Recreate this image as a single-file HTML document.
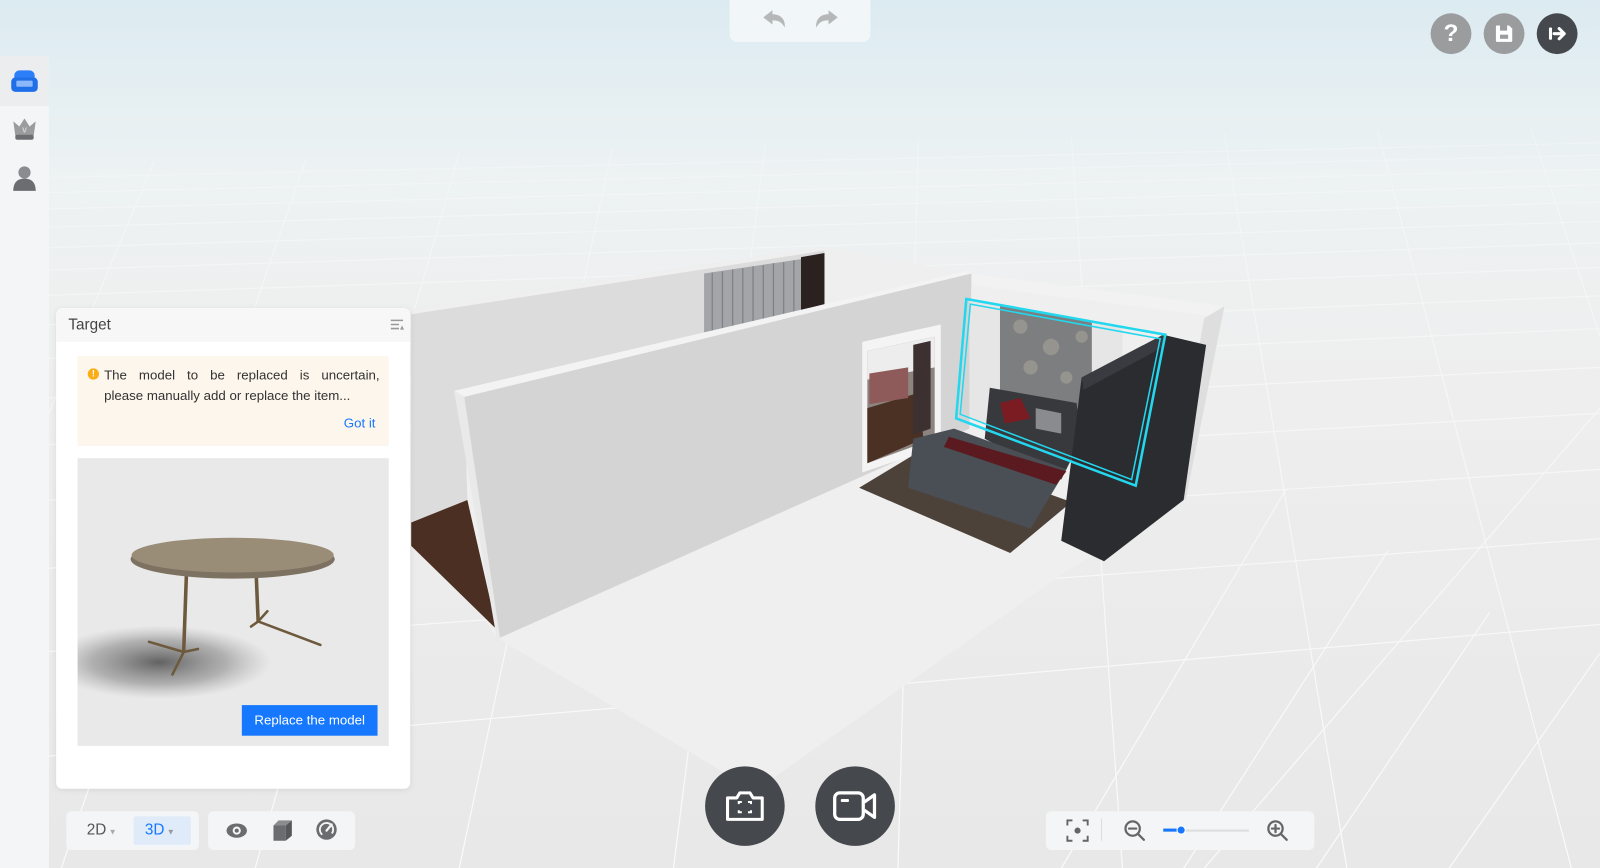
<!DOCTYPE html>
<html><head><meta charset="utf-8">
<style>
html,body{margin:0;padding:0;width:1600px;height:868px;overflow:hidden;background:#ececec;}
#w{position:absolute;left:0;top:0;width:1568px;height:851px;transform:scale(1.0204);transform-origin:0 0;font-family:"Liberation Sans",sans-serif;}
.abs{position:absolute;}
.panel{left:55px;top:302px;width:347px;height:471px;background:#fff;border-radius:6px;box-shadow:0 1px 6px rgba(0,0,0,.08);overflow:hidden;}
.bar{background:#f4f5f6;border-radius:5px;}
.circ{border-radius:50%;display:flex;align-items:center;justify-content:center;}
</style></head><body><div id="w">
<svg class="abs" style="left:0;top:0" width="1568" height="851" viewBox="0 0 1568 851">
<defs>
<linearGradient id="sky" x1="0" y1="0" x2="0" y2="1">
<stop offset="0" stop-color="#dcebf1"/><stop offset="0.2" stop-color="#edf2f3"/><stop offset="0.45" stop-color="#eeeeee"/><stop offset="1" stop-color="#e8e8e8"/></linearGradient>
<linearGradient id="fade" x1="0" y1="0" x2="0" y2="1"><stop offset="0" stop-color="#fff" stop-opacity="0"/><stop offset="0.25" stop-color="#fff" stop-opacity="0.5"/><stop offset="1" stop-color="#fff" stop-opacity="1"/></linearGradient>
<mask id="m"><rect width="1568" height="851" fill="url(#fade)"/></mask>
</defs>
<rect width="1568" height="851" fill="url(#sky)"/>
<g stroke="#fafafa" stroke-width="1.2" fill="none" mask="url(#m)">
<path d="M0 175 L1568 140 M0 190 L1568 152 M0 206 L1568 166 M0 224 L1568 181 M0 244 L1568 198 M0 266 L1568 217 M0 291 L1568 238 M0 320 L1568 262 M0 353 L1568 290 M0 392 L1568 322 M0 438 L1568 360 M0 493 L1568 405 M0 560 L1568 460 M0 642 L1568 528 M0 745 L1568 612"/>
<path d="M150 160 L0 520 M300 155 L60 851 M450 150 L250 851 M600 145 L450 851 M750 140 L660 851 M900 137 L880 851 M1050 134 L1100 851 M1200 131 L1320 851 M1350 128 L1540 851 M1500 125 L1568 330"/>
<path d="M1260 480 L1040 851 M1360 540 L1160 851 M1460 600 L1290 851 M1568 640 L1420 851 M1568 400 L1180 851"/>
</g>
<!-- room floor -->
<polygon points="403,500 487,625 740,775 1045,560 1160,490 1200,300 950,268 808,242 403,303" fill="#efefef"/>
<!-- left back wall -->
<polygon points="403,303 808,242 808,300 455,389 458,490 403,512" fill="#dcdcdc"/>
<polygon points="403,303 808,242 812,245 403,308" fill="#efefef"/>
<polygon points="403,512 458,490 487,617 403,535" fill="#4a2f22"/>
<!-- curtain -->
<polygon points="690,268 785,254 785,310 690,326" fill="#a3a5a8"/>
<g stroke="#7e8085" stroke-width="1.2"><path d="M698 267 L698 325 M708 266 L708 323 M718 264 L718 322 M728 263 L728 320 M738 261 L738 318 M748 260 L748 317 M758 258 L758 315 M768 257 L768 313 M778 255 L778 312"/></g>
<polygon points="785,252 808,248 808,298 785,304" fill="#2b2220"/>
<!-- right bedroom walls -->
<polygon points="950,268 1200,300 1190,310 955,280" fill="#f2f2f2"/>
<polygon points="1180,312 1200,300 1162,490 1150,486" fill="#dedede"/>
<!-- front wall -->
<polygon points="445,383 950,265 952,268 455,389" fill="#f3f3f3"/>
<polygon points="445,383 455,389 490,625 487,627" fill="#e9e9e9"/>
<polygon points="455,389 952,268 950,420 490,625" fill="#d4d4d4"/>
<!-- door/mirror -->
<polygon points="845,335 922,318 922,437 845,463" fill="#f4f4f4"/>
<polygon points="850,344 916,330 916,430 850,454" fill="#8c857f"/>
<polygon points="850,344 916,330 916,360 850,372" fill="#ededed"/>
<polygon points="850,400 900,385 905,430 850,454" fill="#4b3024"/>
<polygon points="852,366 890,360 890,390 852,396" fill="#8e5a5a"/>
<polygon points="895,338 912,334 912,420 895,426" fill="#3c3030"/>
<!-- bedroom back -->
<polygon points="950,295 1100,320 1100,445 950,410" fill="#e6e6e6"/>
<polygon points="980,300 1070,315 1070,440 980,410" fill="#7c7e80"/>
<g fill="#a8a39a" opacity="0.6"><circle cx="1000" cy="320" r="7"/><circle cx="1030" cy="340" r="8"/><circle cx="1060" cy="330" r="6"/><circle cx="1010" cy="360" r="7"/><circle cx="1045" cy="370" r="6"/></g>
<!-- rug -->
<polygon points="842,478 905,440 1050,492 990,542" fill="#4d4239"/>
<!-- bed -->
<polygon points="970,380 1055,395 1060,430 1040,470 965,430" fill="#38393d"/>
<polygon points="980,395 1000,390 1010,410 985,415" fill="#7a1c22"/>
<polygon points="1015,400 1040,405 1040,425 1015,420" fill="#8a8b8e"/>
<polygon points="895,430 935,420 1045,460 1010,518 890,478" fill="#4a4e55"/>
<polygon points="930,428 1045,462 1035,475 925,438" fill="#5a1a1f"/>
<!-- wardrobe -->
<polygon points="1060,370 1140,328 1182,338 1160,490 1082,550 1040,530" fill="#2b2c30"/>
<polygon points="1060,370 1140,328 1140,340 1062,382" fill="#3a3b40"/>
<!-- cyan frame -->
<polygon points="947,293 1142,328 1113,476 937,410" fill="none" stroke="#22d7ee" stroke-width="2.5"/>
<polygon points="951,298 1137,332 1109,470 941,406" fill="none" stroke="#22d7ee" stroke-width="1.5"/>
</svg>

<!-- sidebar -->
<div class="abs" style="left:0;top:55px;width:48px;height:796px;background:#f3f5f6;"></div>
<div class="abs" style="left:0;top:55px;width:48px;height:49px;background:#ebedef;"></div>
<svg class="abs" style="left:10px;top:66px" width="28" height="26" viewBox="0 0 28 26"><rect x="4" y="3" width="20" height="16" rx="5" fill="#2d7ff9"/><rect x="1" y="10" width="26" height="14" rx="4" fill="#1f6fe8"/><rect x="6" y="13" width="16" height="6" rx="1" fill="#8cb8fb"/></svg>
<svg class="abs" style="left:11px;top:113px" width="26" height="26" viewBox="0 0 26 26"><path d="M2 6 L8 11 L13 3 L18 11 L24 6 L22 20 L4 20 Z" fill="#9a9c9e"/><rect x="4" y="19" width="18" height="5" rx="2" fill="#6b6d70"/><text x="13" y="17" font-size="7" text-anchor="middle" fill="#ddd" font-weight="bold" font-family="Liberation Sans">V</text></svg>
<svg class="abs" style="left:11px;top:161px" width="26" height="28" viewBox="0 0 26 28"><circle cx="13" cy="8" r="6" fill="#8a8c8f"/><path d="M2 26 C2 16 8 14 13 14 C18 14 24 16 24 26 Z" fill="#6b6d70"/></svg>

<!-- top undo -->
<div class="abs" style="left:715px;top:0;width:138px;height:41px;background:rgba(244,248,250,.85);border-radius:0 0 7px 7px;"></div>
<svg class="abs" style="left:745px;top:8px" width="28" height="22" viewBox="0 0 28 22"><path d="M3 9 L12 2 L12 6 C20 6 25 11 24 19 C21 13 17 12 12 12 L12 16 Z" fill="#b5b7b9"/></svg>
<svg class="abs" style="left:796px;top:8px" width="28" height="22" viewBox="0 0 28 22"><path d="M25 9 L16 2 L16 6 C8 6 3 11 4 19 C7 13 11 12 16 12 L16 16 Z" fill="#b5b7b9"/></svg>

<!-- top right -->
<div class="abs circ" style="left:1402px;top:13px;width:40px;height:40px;background:#9a9c9e;color:#fff;font-size:24px;font-weight:bold;">?</div>
<div class="abs circ" style="left:1454px;top:13px;width:40px;height:40px;background:#9a9c9e;"><svg width="20" height="20" viewBox="0 0 20 20"><path d="M2 3 Q2 2 3 2 L15 2 L18 5 L18 17 Q18 18 17 18 L3 18 Q2 18 2 17 Z" fill="#fff"/><rect x="6" y="2" width="7" height="5" fill="#9a9c9e"/><rect x="6" y="11" width="8" height="4" fill="#9a9c9e"/></svg></div>
<div class="abs circ" style="left:1506px;top:13px;width:40px;height:40px;background:#45484c;"><svg width="20" height="18" viewBox="0 0 20 18"><rect x="2" y="3" width="3" height="12" rx="1" fill="#fff"/><path d="M7 9 L16 9 M12 4 L17 9 L12 14" stroke="#fff" stroke-width="3" fill="none" stroke-linecap="round" stroke-linejoin="round"/></svg></div>

<!-- panel -->
<div class="abs panel">
 <div style="height:33px;background:#f7f7f7;position:relative;">
  <div style="position:absolute;left:12px;top:8px;font-size:15px;color:#444;">Target</div>
  <svg style="position:absolute;right:6px;top:10px" width="14" height="12" viewBox="0 0 14 12"><path d="M1 2 H13 M1 6 H9 M1 10 H9" stroke="#999" stroke-width="1.5"/><path d="M10 11 L12 7 L14 11Z" fill="#999"/></svg>
 </div>
 <div style="position:absolute;left:21px;top:47px;width:305px;height:88px;background:#fdf6ec;">
  <div style="position:absolute;left:10px;top:12px;width:11px;height:11px;border-radius:50%;background:#faad14;color:#fff;font-size:9px;text-align:center;line-height:11px;font-weight:bold;">!</div>
  <div style="position:absolute;left:26px;top:9px;width:270px;font-size:13px;line-height:20px;color:#333;text-align:justify;text-align-last:justify;">The model to be replaced is uncertain,</div>
  <div style="position:absolute;left:26px;top:29px;width:270px;font-size:13px;line-height:20px;color:#333;">please manually add or replace the item...</div>
  <div style="position:absolute;right:13px;top:58px;font-size:13px;color:#1677ff;">Got it</div>
 </div>
 <div style="position:absolute;left:21px;top:147px;width:305px;height:282px;background:#e9e9e9;overflow:hidden;">
  <svg width="305" height="282" viewBox="0 0 305 282">
   <defs><radialGradient id="sh" cx="0.5" cy="0.5" r="0.5"><stop offset="0" stop-color="#4a4a4a" stop-opacity=".85"/><stop offset="0.6" stop-color="#777" stop-opacity=".5"/><stop offset="1" stop-color="#999" stop-opacity="0"/></radialGradient></defs>
   <ellipse cx="80" cy="200" rx="110" ry="36" fill="url(#sh)"/>
   <path d="M107 105 L104 190 M175 112 L177 160" stroke="#6d5a3c" stroke-width="3.5"/>
   <path d="M70 180 L104 190 M104 190 L93 212 M104 190 L118 187 M177 160 L238 183 M177 160 L186 150 M177 160 L170 165" stroke="#6d5a3c" stroke-width="2.5" stroke-linecap="round"/>
   <ellipse cx="152" cy="99" rx="100" ry="19" fill="#7d7161"/>
   <ellipse cx="152" cy="95" rx="99" ry="17" fill="#9a8d78"/>
  </svg>
  <div style="position:absolute;left:161px;top:242px;width:133px;height:30px;background:#1677ff;color:#fff;font-size:13px;line-height:30px;text-align:center;">Replace the model</div>
 </div>
</div>

<!-- bottom left bars -->
<div class="abs bar" style="left:65px;top:795px;width:130px;height:38px;"></div>
<div class="abs" style="left:85px;top:805px;font-size:15px;color:#555;">2D<span style="font-size:8px;color:#aaa;"> ▼</span></div>
<div class="abs" style="left:131px;top:800px;width:56px;height:28px;background:#e0ebfa;border-radius:2px;"></div>
<div class="abs" style="left:142px;top:805px;font-size:15px;color:#1677ff;">3D<span style="font-size:8px;color:#999;"> ▼</span></div>
<div class="abs bar" style="left:204px;top:795px;width:144px;height:38px;"></div>
<svg class="abs" style="left:221px;top:804px" width="22" height="20" viewBox="0 0 22 20"><ellipse cx="11" cy="10" rx="10" ry="7" fill="#6a6c6f"/><circle cx="11" cy="10" r="4" fill="#f4f5f6"/><circle cx="11" cy="10" r="2" fill="#6a6c6f"/></svg>
<svg class="abs" style="left:266px;top:803px" width="22" height="22" viewBox="0 0 22 22"><path d="M2 6 L14 6 L14 21 L2 21 Z" fill="#6a6c6f"/><path d="M2 6 L7 1 L20 1 L14 6Z" fill="#8a8c8f"/><path d="M14 6 L20 1 L20 16 L14 21Z" fill="#55575a"/></svg>
<svg class="abs" style="left:309px;top:802px" width="22" height="22" viewBox="0 0 22 22"><circle cx="11" cy="11" r="10" fill="#6a6c6f"/><circle cx="11" cy="11" r="6.5" fill="none" stroke="#f4f5f6" stroke-width="1.8" stroke-dasharray="30 12" transform="rotate(130 11 11)"/><path d="M11 12 L16 6" stroke="#f4f5f6" stroke-width="2.2" stroke-linecap="round"/></svg>

<!-- camera buttons -->
<div class="abs circ" style="left:691px;top:751px;width:78px;height:78px;background:#45484c;"><svg width="40" height="34" viewBox="0 0 40 34"><path d="M3 9 L12 9 L15 4 L25 4 L28 9 L37 9 L37 30 L3 30 Z" fill="none" stroke="#fff" stroke-width="3" stroke-linejoin="round"/><path d="M14 15 V13 H17 M23 13 H26 V15 M26 21 V23 H23 M17 23 H14 V21" stroke="#fff" stroke-width="2" fill="none"/></svg></div>
<div class="abs circ" style="left:799px;top:751px;width:78px;height:78px;background:#45484c;"><svg width="44" height="32" viewBox="0 0 44 32"><rect x="2" y="3" width="28" height="26" rx="5" fill="none" stroke="#fff" stroke-width="3.2"/><rect x="8" y="9" width="8" height="3" rx="1" fill="#fff"/><path d="M31 12 L41 5 L41 27 L31 20" fill="none" stroke="#fff" stroke-width="3.2" stroke-linejoin="round"/></svg></div>

<!-- zoom bar -->
<div class="abs bar" style="left:1025px;top:795px;width:263px;height:38px;"></div>
<svg class="abs" style="left:1045px;top:803px" width="22" height="22" viewBox="0 0 22 22"><path d="M1 6 V1 H6 M16 1 H21 V6 M21 16 V21 H16 M6 21 H1 V16" stroke="#666" stroke-width="2" fill="none"/><circle cx="11" cy="11" r="3" fill="#666"/></svg>
<div class="abs" style="left:1079px;top:802px;width:1px;height:22px;background:#ddd;"></div>
<svg class="abs" style="left:1101px;top:803px" width="22" height="22" viewBox="0 0 22 22"><circle cx="9" cy="9" r="7" fill="none" stroke="#666" stroke-width="2.2"/><path d="M5.5 9 H12.5 M14 14 L20 20" stroke="#666" stroke-width="2.2" stroke-linecap="round"/></svg>
<div class="abs" style="left:1140px;top:813px;width:84px;height:2px;background:#ddd;"></div>
<div class="abs" style="left:1140px;top:812px;width:17px;height:3px;background:#1677ff;"></div>
<div class="abs" style="left:1153px;top:809px;width:7px;height:7px;border-radius:50%;background:#1677ff;border:1px solid #fff;"></div>
<svg class="abs" style="left:1241px;top:803px" width="22" height="22" viewBox="0 0 22 22"><circle cx="9" cy="9" r="7" fill="none" stroke="#666" stroke-width="2.2"/><path d="M5.5 9 H12.5 M9 5.5 V12.5 M14 14 L20 20" stroke="#666" stroke-width="2.2" stroke-linecap="round"/></svg>
</div></body></html>
